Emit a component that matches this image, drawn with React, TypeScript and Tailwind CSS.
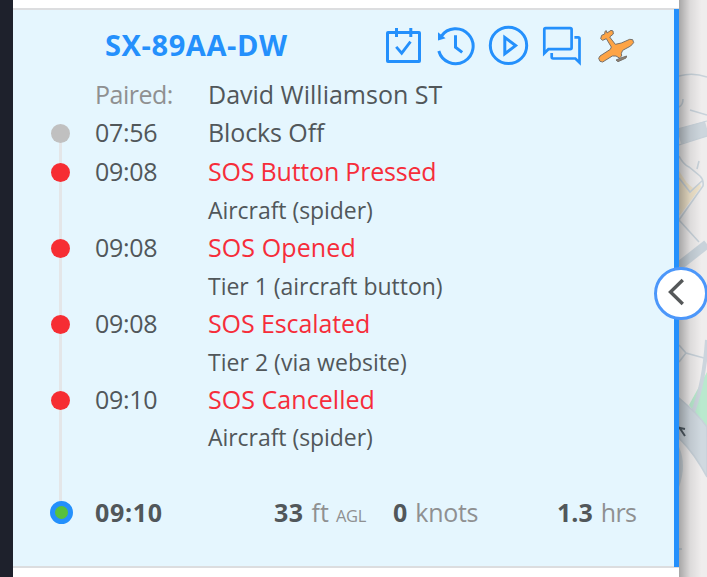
import React from "react";

type TimelineEvent = {
  time: string;
  label: string;
  labelClass: string;
  detail: string;
  detailClass: string;
};

const events: TimelineEvent[] = [
  { time: "09:08", label: "SOS Button Pressed", labelClass: "tracking-[-0.2px]", detail: "Aircraft (spider)", detailClass: "tracking-[-0.05px]" },
  { time: "09:08", label: "SOS Opened", labelClass: "tracking-[0.1px]", detail: "Tier 1 (aircraft button)", detailClass: "tracking-[-0.02px]" },
  { time: "09:08", label: "SOS Escalated", labelClass: "tracking-[-0.1px]", detail: "Tier 2 (via website)", detailClass: "tracking-[0.03px]" },
  { time: "09:10", label: "SOS Cancelled", labelClass: "tracking-[0.05px]", detail: "Aircraft (spider)", detailClass: "tracking-[-0.05px]" },
];

const iconClass = "block h-[42px] w-[42px] shrink-0";

function CalendarIcon() {
  return (
    <svg className={iconClass} viewBox="0 0 42 42" fill="none" stroke="#2490fc">
      <rect x="4.5" y="7.5" width="32" height="29" rx="0.5" strokeWidth="3" />
      <path d="M13.5 3v9M27.8 3v9" strokeWidth="3" />
      <path d="M13.2 21.8l5.5 6.4 8.8-11.6" strokeWidth="2.8" />
    </svg>
  );
}

function HistoryIcon() {
  return (
    <svg className={iconClass} viewBox="0 0 42 42" fill="none" stroke="#2490fc">
      <path d="M6.2 11.3A17.5 17.5 0 1 1 3.8 26" strokeWidth="3" />
      <path d="M3 7.2l7.6 6L3 15.4z" fill="#2490fc" stroke="none" />
      <path d="M20.5 10.2V22.2L27.2 27.4" strokeWidth="3" />
    </svg>
  );
}

function PlayIcon() {
  return (
    <svg className={iconClass} viewBox="0 0 42 42" fill="none" stroke="#2490fc" strokeWidth="3">
      <circle cx="21.5" cy="20.4" r="18.2" />
      <path d="M17.8 12.4v16.4l10.8-8.2z" />
    </svg>
  );
}

function ChatIcon() {
  return (
    <svg className={iconClass} viewBox="0 0 42 42" fill="none" stroke="#2490fc" strokeWidth="2.7">
      <path d="M3.3 28.2V4.6q0-1.4 1.4-1.4H29.2q1.4 0 1.4 1.4V22.8q0 1.4-1.4 1.4H7.4z" />
      <path d="M33.4 12.4H37.1q1.4 0 1.4 1.4V37.6L34.4 33.5H12.1q-1.4 0-1.4-1.4V28" />
    </svg>
  );
}

function PlaneIcon() {
  return (
    <svg className={iconClass} viewBox="3 -3 126 126" stroke="#77716b" strokeWidth="3" strokeLinejoin="round">
      <path d="M66 102L80 96 98 90 96 96 72 107z" fill="#8f8272" />
      <path
        d="M20 38L23 28 32 24 33 16 37 14 39 21 51 13 57 15 58 24 47 33 64 55 82 51 107 40 116 41 119 50 110 60 86 73 82 82 83 90 76 96 66 90 55 90 26 108 18 106 14 97 18 90 49 70 52 63 37 38 26 43z"
        fill="#fda446"
      />
    </svg>
  );
}

function MapStrip() {
  return (
    <div className="relative h-full w-[28px] overflow-hidden bg-[#efeded]">
      <svg className="block h-full w-full" viewBox="0 0 28 577" fill="none" stroke="#c8d2da" strokeWidth="1.6">
        <path d="M0 171l12 18-2 9L0 211z" fill="#f0e4cb" stroke="none" />
        <path d="M8 183l6 5 7-5 1 4L2 214 0 215z" fill="#f0e4cb" stroke="none" />
        <path d="M0 76q14-4 28 1M0 107q4-2 4-8M11 110l17 5" />
        <path d="M0 136.5L28 128.5" stroke="#cdd6dd" strokeWidth="15" />
        <path d="M0 128.5L28 121M0 145L28 136" strokeWidth="1.2" />
        <path d="M0 156q4 8 10 11l11 9q4 4 3 10L0 220M0 178l11 14 13-12M20 161l-2 8M0 220l20 22" />
        <path d="M0 266L28 244" stroke="#c9d3db" strokeWidth="9" />
        <path d="M0 345l7 8 18 5M7 353l-7 9" />
        <path d="M28 372L10 405 28 430z" fill="#b9e9ce" stroke="none" />
        <path d="M28 340Q25 384 14 412" stroke="#ccd5dd" strokeWidth="4" />
        <path d="M0 398q18 15 28 29v50Q16 454 0 438z" fill="#d0d9e0" />
        <path d="M0 447q8 18 0 40z" fill="#d0d9e0" stroke="none" />
        <path d="M0 427l6 9M1 428l5 1" stroke="#525e67" strokeWidth="2" />
        <path d="M0 549h3" />
      </svg>
      <div className="absolute inset-0 bg-gradient-to-r from-black/30 via-black/8 via-40% to-transparent to-80%" />
    </div>
  );
}

const rowClass = "flex h-[37.9px] items-center";

function Marker({ color }: { color: string }) {
  return (
    <div className="flex w-[82px] shrink-0 pt-[2px] pl-[38px]">
      <span className={"relative block h-[19px] w-[19px] rounded-full " + color} />
    </div>
  );
}

export default function App() {
  return (
    <div className="relative flex h-[577px] w-[707px] overflow-hidden bg-white font-['Open_Sans','Noto_Sans',sans-serif] text-[25px] leading-none text-[#51575a] whitespace-nowrap">
      <div className="w-[13px] shrink-0 bg-[#1e212c]" />
      <main className="flex w-[666px] shrink-0 flex-col pt-[8px]">
        <section className="relative h-[560px] border-y-2 border-[#dcdddf] bg-[#e5f6fe]">
          <div className="absolute -top-px right-0 -bottom-px w-[5px] bg-[#2490fc]" />
          <div className="absolute top-[123px] left-[46px] h-[379px] w-[3px] bg-[#e4e6e8]" />
          <header className="flex h-[66px] items-start pt-[15px] pl-[92px]">
            <h1 className="w-[278px] pt-[5px] text-[29px] leading-[29px] font-bold tracking-[0.6px] text-[#2490fc]">SX-89AA-DW</h1>
            <div className="flex">
              <CalendarIcon />
              <span className="w-[10px]" />
              <HistoryIcon />
              <span className="w-[10px]" />
              <PlayIcon />
              <span className="w-[12px]" />
              <ChatIcon />
              <span className="w-[12px]" />
              <PlaneIcon />
            </div>
          </header>
          <div className={rowClass}>
            <span className="w-[195px] shrink-0 pl-[82px] tracking-[-0.5px] text-[#8f9091]">Paired:</span>
            <span>David Williamson ST</span>
          </div>
          <div className={rowClass + " mb-[1px]"}>
            <Marker color="bg-[#c0c0c0]" />
            <span className="w-[113px] shrink-0 tracking-[-0.3px]">07:56</span>
            <span className="tracking-[-0.1px]">Blocks Off</span>
          </div>
          {events.map((event, i) => (
            <div key={i}>
              <div className={rowClass}>
                <Marker color="bg-[#f62d33]" />
                <span className="w-[113px] shrink-0 tracking-[-0.3px]">{event.time}</span>
                <span className={"text-[#f62d3a] " + event.labelClass}>{event.label}</span>
              </div>
              <div className={rowClass + " pt-[2px]"}>
                <span className={"pl-[195px] text-[23px] " + event.detailClass}>{event.detail}</span>
              </div>
            </div>
          ))}
          <div className="h-[37.9px]" />
          <div className={rowClass}>
            <div className="flex w-[82px] shrink-0 pl-[36.5px]">
              <span className="relative block h-[23px] w-[23px] rounded-full border-[5px] border-[#2490fc] bg-[#58c13c]" />
            </div>
            <span className="w-[179px] shrink-0 font-bold tracking-[0.7px]">09:10</span>
            <span className="flex w-[119px] shrink-0 items-baseline">
              <b className="tracking-[0.5px]">33</b>
              <span className="ml-[8px] text-[#8f9091]">ft</span>
              <span className="ml-[7px] text-[16.5px] tracking-[-0.3px] text-[#8f9091]">AGL</span>
            </span>
            <span className="flex w-[164px] shrink-0 items-baseline">
              <b>0</b>
              <span className="ml-[8px] tracking-[-0.3px] text-[#8f9091]">knots</span>
            </span>
            <span className="flex items-baseline">
              <b>1.3</b>
              <span className="ml-[8px] tracking-[-0.6px] text-[#8f9091]">hrs</span>
            </span>
          </div>
        </section>
      </main>
      <MapStrip />
      <button aria-label="Collapse" className="absolute top-[267px] left-[653.5px] flex h-[53px] w-[54px] items-center justify-center rounded-full border-[3px] border-[#4c97fa] bg-white">
        <svg className="mr-[10px] mb-[3px] block h-[28px] w-[18px]" viewBox="0 0 18 28" fill="none" stroke="#555859" strokeWidth="3.4">
          <path d="M15.8 2L3.5 14l12.3 12" />
        </svg>
      </button>
    </div>
  );
}
